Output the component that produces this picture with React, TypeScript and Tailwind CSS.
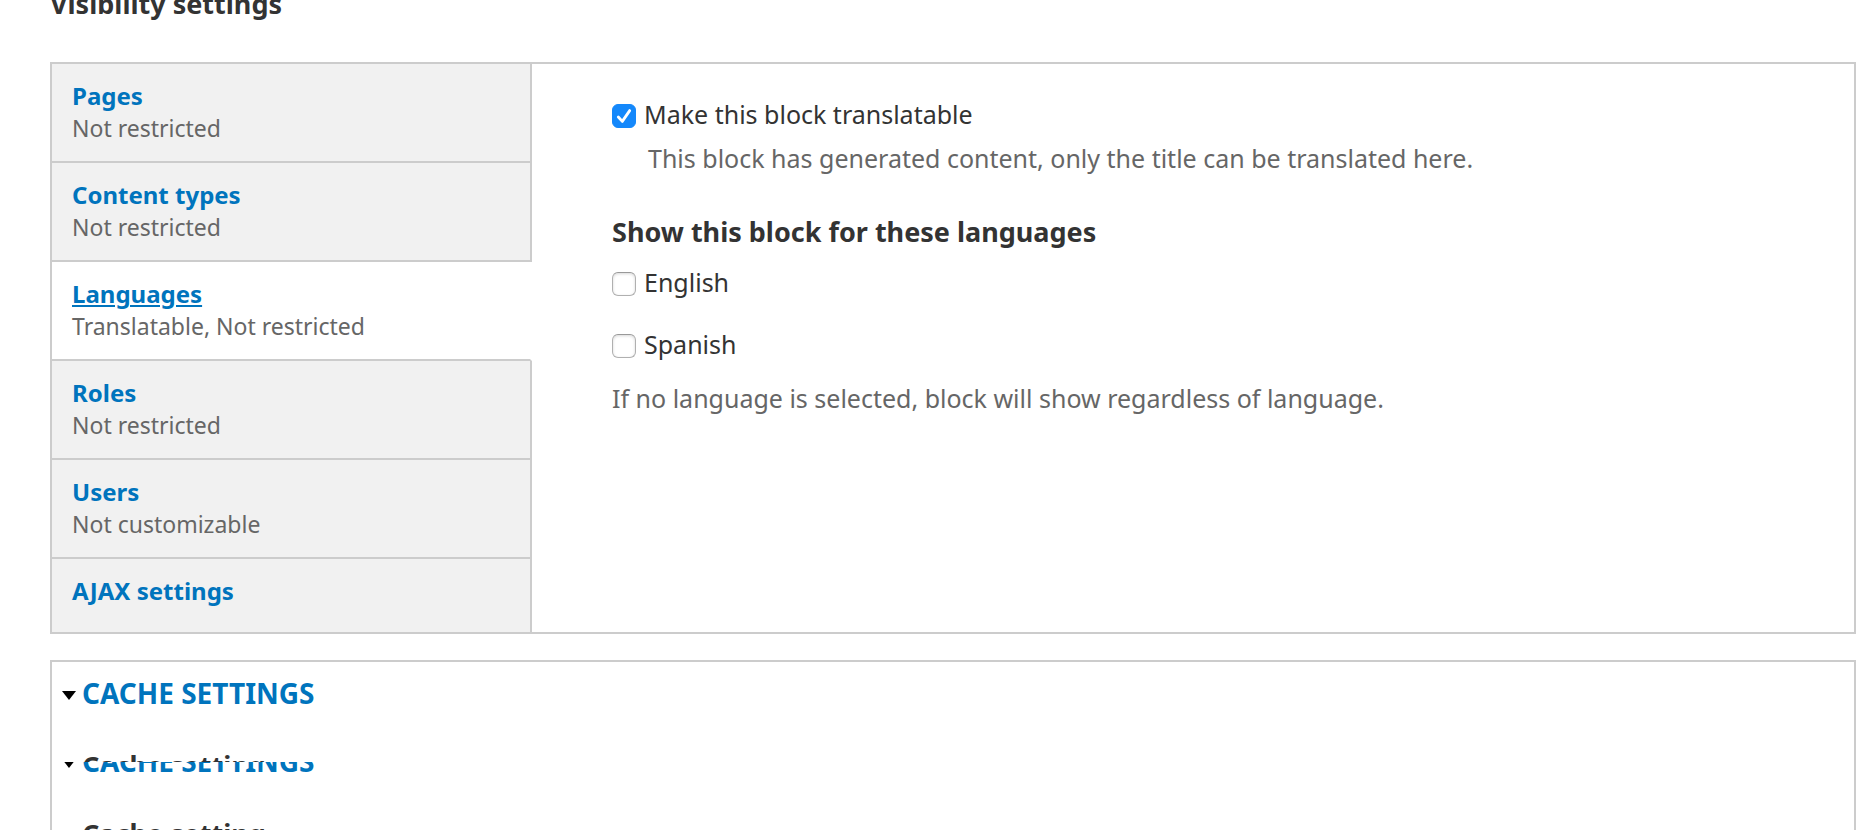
import { useState } from "react";

const TABS = [
  { title: "Pages", summary: "Not restricted" },
  { title: "Content types", summary: "Not restricted" },
  { title: "Languages", summary: "Translatable, Not restricted" },
  { title: "Roles", summary: "Not restricted" },
  { title: "Users", summary: "Not customizable" },
  { title: "AJAX settings", summary: "" },
];

function Checkbox({ id, label, initial = false }: { id: string; label: string; initial?: boolean }) {
  const [on, setOn] = useState(initial);
  return (
    <div className="flex items-start gap-2 text-[25px] leading-8">
      <span className="mt-1.5 grid size-6 shrink-0">
        <input
          id={id}
          type="checkbox"
          checked={on}
          onChange={(e) => setOn(e.target.checked)}
          className="col-start-1 row-start-1 size-6 appearance-none rounded-[6px] border border-[#b0b0b0] border-t-[#999999] bg-white shadow-[inset_0_1px_3px_#d8d8d8] checked:border-[#1488fb] checked:bg-[#1488fb] checked:shadow-none"
        />
        {on && (
          <svg viewBox="0 0 24 24" className="pointer-events-none col-start-1 row-start-1 size-6" fill="none" stroke="white" strokeWidth="2.8" strokeLinecap="round" strokeLinejoin="round">
            <path d="M6.3 13 10.3 17.4 17.7 6.6" />
          </svg>
        )}
      </span>
      <label htmlFor={id}>{label}</label>
    </div>
  );
}

function CacheLegend() {
  return (
    <a href="#cache" className="flex items-center gap-1.5 text-[28px] leading-10 font-bold text-[#0074bd]">
      <svg viewBox="0 0 14 9" className="mt-1 h-[9px] w-3.5 shrink-0" fill="black">
        <path d="M0 0H14L7 9Z" />
      </svg>
      CACHE SETTINGS
    </a>
  );
}

export default function App() {
  const [active, setActive] = useState("Languages");
  return (
    <main className="h-screen overflow-hidden bg-white pr-[18px] pl-[50px] font-['Noto_Sans',sans-serif] text-[#333333]">
      <h2 className="-mt-3 text-[27px] leading-8 font-bold">Visibility settings</h2>

      <section className="mt-[42px] flex border-2 border-[#cccccc]">
        <ul className="w-[480px] shrink-0">
          {TABS.map(({ title, summary }) => {
            const selected = title === active;
            return (
              <li
                key={title}
                className={
                  selected
                    ? "border-r-2 border-b-2 border-r-white border-b-[#cccccc] bg-white last:border-b-0"
                    : "border-r-2 border-b-2 border-[#cccccc] bg-[#f1f1f1] last:border-b-0"
                }
              >
                <a
                  href="#tab"
                  onClick={(e) => {
                    e.preventDefault();
                    setActive(title);
                  }}
                  className={summary ? "block pt-4 pr-4 pb-[17px] pl-5 leading-8" : "block pt-4 pr-4 pb-[25px] pl-5 leading-8"}
                >
                  <strong
                    className={
                      selected
                        ? "block text-2xl leading-8 font-bold text-[#0074bd] underline decoration-2 underline-offset-2"
                        : "block text-2xl leading-8 font-bold text-[#0074bd]"
                    }
                  >
                    {title}
                  </strong>
                  {summary && <span className="block text-[23px] leading-8 text-[#666666]">{summary}</span>}
                </a>
              </li>
            );
          })}
        </ul>

        <div className="min-w-0 flex-1 pt-[34px] pr-10 pl-20">
          <Checkbox id="translatable" label="Make this block translatable" initial />
          <p className="mt-3 pl-9 text-[25px] leading-8 text-[#666666]">
            This block has generated content, only the title can be translated here.
          </p>
          <h3 className="mt-[42px] text-[27px] leading-8 font-bold">Show this block for these languages</h3>
          <div className="mt-[18px] flex flex-col gap-[30px]">
            <Checkbox id="english" label="English" />
            <Checkbox id="spanish" label="Spanish" />
          </div>
          <p className="mt-[22px] text-[25px] leading-8 text-[#666666]">
            If no language is selected, block will show regardless of language.
          </p>
        </div>
      </section>

      <section className="mt-[26px] border-2 border-[#cccccc] px-2.5 pt-[11px] pb-10">
        <CacheLegend />
        <div className="mt-[33px] h-4 overflow-hidden pl-5">
          <strong className="block text-[27px] leading-10 font-bold">Cache setting</strong>
        </div>
        <div className="h-[19px] overflow-hidden">
          <div className="-mt-[21px]">
            <CacheLegend />
          </div>
        </div>
        <strong className="mt-[33px] block pl-5 text-[27px] leading-10 font-bold">Cache setting</strong>
      </section>
    </main>
  );
}
